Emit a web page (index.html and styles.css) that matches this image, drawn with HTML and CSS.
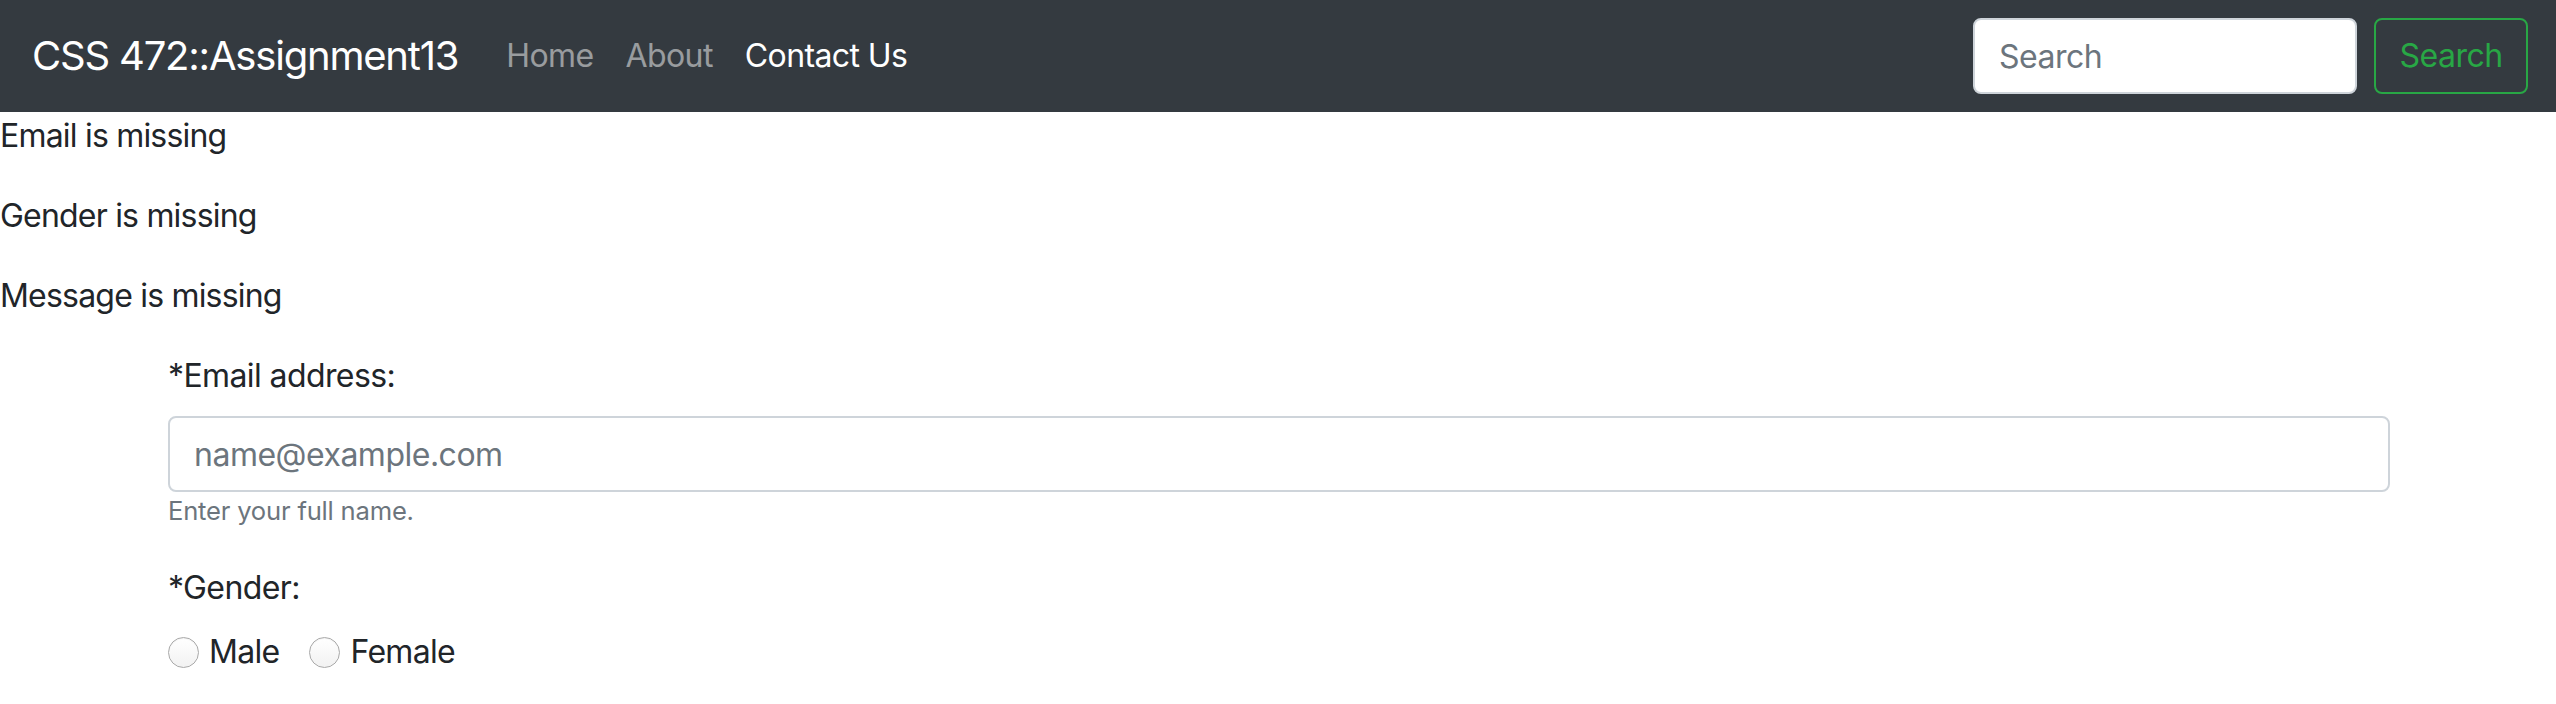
FILE: index.html
```html
<!DOCTYPE html>
<html lang="en">
<head>
<meta charset="utf-8">
<title>CSS 472::Assignment13 - Contact Us</title>
<link rel="stylesheet" href="styles.css">
</head>
<body>
<nav class="navbar">
  <a class="brand" href="#">CSS 472::Assignment13</a>
  <ul class="nav-links">
    <li><a class="nav-link" href="#">Home</a></li>
    <li><a class="nav-link" href="#">About</a></li>
    <li><a class="nav-link active" href="#">Contact Us</a></li>
  </ul>
  <form class="search-form">
    <input class="search-input" type="search" placeholder="Search">
    <button class="search-btn" type="button">Search</button>
  </form>
</nav>
<main>
  <p class="error">Email is missing</p>
  <p class="error">Gender is missing</p>
  <p class="error">Message is missing</p>
  <div class="container">
    <form class="contact-form">
      <div class="form-group">
        <label class="form-label" for="email">*Email address:</label>
        <input class="form-control" id="email" type="email" placeholder="name@example.com">
        <small class="form-text">Enter your full name.</small>
      </div>
      <div class="form-group">
        <label class="form-label">*Gender:</label>
        <div class="radio-row">
          <label class="check-inline"><input class="radio" type="radio" name="gender" value="male">Male</label>
          <label class="check-inline"><input class="radio" type="radio" name="gender" value="female">Female</label>
        </div>
      </div>
    </form>
  </div>
</main>
</body>
</html>
```

FILE: styles.css
```css
* { box-sizing: border-box; }
html, body { margin: 0; padding: 0; }
body {
  font-family: Inter, "Noto Sans", "Liberation Sans", sans-serif;
  font-size: 32px;
  line-height: 48px;
  color: #212529;
  background: #fff;
}
.navbar {
  display: flex;
  align-items: center;
  height: 112px;
  padding: 0 28px 0 32px;
  background: #343a40;
}
.brand {
  color: #fff;
  text-decoration: none;
  font-size: 40px;
  line-height: 60px;
  margin-right: 32px;
  letter-spacing: -1.2px;
}
.nav-links {
  display: flex;
  list-style: none;
  margin: 0;
  padding: 0;
  flex: 1;
}
.nav-link {
  display: block;
  padding: 16px 16px;
  color: rgba(255,255,255,0.5);
  text-decoration: none;
  letter-spacing: -0.6px;
}
.nav-link.active { color: #fff; }
.search-form {
  display: flex;
  align-items: center;
}
.search-input {
  width: 384px;
  height: 76px;
  padding: 12px 24px;
  border: 2px solid #ced4da;
  border-radius: 8px;
  background: #fff;
  font: inherit;
  letter-spacing: -0.5px;
  color: #495057;
  margin-right: 17px;
  outline: none;
}
.search-input::placeholder, .form-control::placeholder { color: #6c757d; opacity: 1; }
.search-btn {
  width: 154px;
  height: 76px;
  padding: 0;
  border: 2px solid #28a745;
  border-radius: 8px;
  background: transparent;
  color: #28a745;
  font: inherit;
  letter-spacing: -0.5px;
}
.error {
  margin: 0 0 32px 0;
  letter-spacing: -0.8px;
}
.container {
  max-width: 2284px;
  margin: 0 auto;
  padding: 0 30px 0 32px;
}
.contact-form { margin: 0; }
.form-group { margin-bottom: 36px; }
.form-label {
  display: inline-block;
  margin-bottom: 16px;
  letter-spacing: -0.6px;
}
.form-control {
  display: block;
  width: 100%;
  height: 76px;
  padding: 12px 24px;
  border: 2px solid #ced4da;
  border-radius: 8px;
  font: inherit;
  letter-spacing: -0.5px;
  color: #495057;
  outline: none;
}
.form-text {
  display: block;
  margin-top: 2px;
  font-size: 25.6px;
  line-height: 34px;
  color: #6c757d;
  letter-spacing: -0.2px;
}
.radio-row {
  display: flex;
  align-items: center;
}
.check-inline {
  display: inline-flex;
  align-items: center;
  margin-right: 30px;
  letter-spacing: -0.7px;
}
.radio {
  appearance: none;
  -webkit-appearance: none;
  width: 31px;
  height: 31px;
  margin: 0 10px 0 0;
  border: 1.5px solid #a9a9a9;
  border-radius: 50%;
  background: linear-gradient(#ffffff, #f2f2f2);
  box-shadow: inset 0 1px 1px rgba(0,0,0,0.05);
}
```
